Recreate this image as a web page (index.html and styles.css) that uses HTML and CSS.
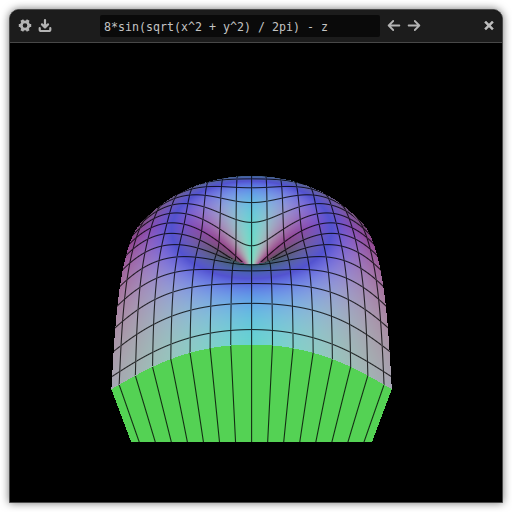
FILE: index.html
```
<!DOCTYPE html>
<html lang="en">
<head>
<meta charset="utf-8">
<title>Surface plot</title>
<link rel="stylesheet" href="styles.css">
</head>
<body>
<div class="window">
  <header class="bar">
    <svg class="icon" width="14" height="14" viewBox="0 0 14 14"><circle cx="7" cy="6.5" r="3.7" fill="none" stroke="#b4b4b4" stroke-width="2.8"/><path d="M11.3 6.5h1.9M.8 6.5h1.9M9.2 2.7l1-1.7M4.8 10.3l-1 1.7M4.8 2.7l-1-1.7M9.2 10.3l1 1.7" stroke="#b4b4b4" stroke-width="3.2"/></svg>
    <svg class="icon save" width="14" height="14" viewBox="0 0 14 14" fill="none" stroke="#b4b4b4" stroke-width="2.2" stroke-linecap="round" stroke-linejoin="round"><path d="M7 1.1v7M4 5.4l3 3 3-3"/><path d="M1.7 9.2v1.2q0 1.6 1.6 1.6h7.4q1.6 0 1.6-1.6V9.2"/></svg>
    <div class="formula">8*sin(sqrt(x^2 + y^2) / 2pi) - z</div>
    <svg class="icon back" width="14" height="14" viewBox="0 0 14 14" fill="none" stroke="#b4b4b4" stroke-width="1.8" stroke-linecap="round" stroke-linejoin="round"><path d="M12.4 6.5H1.6M6.2 2L1.7 6.5 6.2 11"/></svg>
    <svg class="icon next" width="14" height="14" viewBox="0 0 14 14" fill="none" stroke="#b4b4b4" stroke-width="1.8" stroke-linecap="round" stroke-linejoin="round"><path d="M1.6 6.5h10.8M7.8 2l4.5 4.5L7.8 11"/></svg>
    <svg class="icon close" width="10" height="10" viewBox="0 0 10 10" fill="none" stroke="#bcbcbc" stroke-width="2.5"><path d="M1.1.6l7.8 7.8M8.9.6L1.1 8.4"/></svg>
  </header>
  <canvas class="plot" id="plot" width="492" height="459"></canvas>
</div>
<script src="plot.js"></script>
</body>
</html>
```
FILE: styles.css
```
* { box-sizing: border-box; }
body { margin: 0; background: #fff; overflow: hidden; }
.window {
  width: 494px;
  height: 494px;
  margin: 9px;
  border: 1px solid #4a4a4a;
  border-radius: 10px 10px 0 0;
  background: #000;
  overflow: hidden;
  box-shadow: 0 0 9px rgba(0, 0, 0, .55);
}
.bar {
  display: flex;
  align-items: center;
  height: 33px;
  padding: 0 8px;
  background: #1c1c1c;
  border-bottom: 1px solid #484848;
}
.icon { flex: none; display: block; }
.save { margin-left: 6px; }
.formula {
  width: 280px;
  height: 22px;
  margin-left: 48px;
  padding-left: 4px;
  border-radius: 2px;
  background: #0a0a0a;
  color: #c4c4c4;
  font: 11.63px/24px "DejaVu Sans Mono", monospace;
  white-space: pre;
}
.back { margin-left: 7px; }
.next { margin-left: 6px; }
.close { margin-left: auto; }
.plot { display: block; }
```
FILE: plot.js
```
// z = A sin(r G / 2pi), cut by a box, seen through a pinhole camera.
const TH = 0.720, D = 53.428, F = 411.999, CX = 251.6, CY = 270.849;
const ZB = -13.836, G = 1.054, A = 7.199, K = 1.048, R = 15;
const OX = 10, OY = 43;
const c = Math.cos(TH), s = Math.sin(TH);
const cv = document.getElementById('plot'), g = cv.getContext('2d');
const W = cv.width, H = cv.height;
const height = (x, y) => A * Math.sin(Math.hypot(x, y) * G / (2 * Math.PI));

function cast(px, py) {
  const dx = (px - CX) / F, v = -(py - CY) / (K * F);
  const dy = -c - v * s, dz = -s + v * c;
  const ox = 0, oy = D * c, oz = D * s;
  let t0 = 0, t1 = 1e9, ax = 0;
  [[ox, dx, -R, R], [oy, dy, -R, R], [oz, dz, ZB, A + .01]].forEach((q, i) => {
    let a = (q[2] - q[0]) / q[1], b = (q[3] - q[0]) / q[1];
    if (a > b) { const m = a; a = b; b = m; }
    if (a > t0) { t0 = a; ax = i; }
    if (b < t1) t1 = b;
  });
  if (t0 >= t1) return null;
  const f = t => oz + dz * t - height(ox + dx * t, oy + dy * t);
  const at = (t, m) => ({ x: dx * t, y: oy + dy * t, m });
  if (f(t0) < 0) return at(t0, ax === 0 ? 1 : 2);
  let p = t0;
  for (let t = t0 + .15; ; t += .15) {
    if (t > t1) t = t1;
    if (f(t) < 0) {
      let a = p, b = t;
      for (let i = 0; i < 14; i++) { const m = (a + b) / 2; if (f(m) < 0) b = m; else a = m; }
      return at(b, 3);
    }
    if (t >= t1) return null;
    p = t;
  }
}

function shade(h) {
  if (h.m === 1) return [100, 40, 40];
  if (h.m === 2) return [84, 210, 84];
  const r = Math.hypot(h.x, h.y) || 1e-6;
  const k = 8 / (2 * Math.PI) * Math.cos(r * G / (2 * Math.PI));
  let n = [-k * h.x / r, -k * h.y / r, 1];
  const l = Math.hypot(...n);
  n = n.map(q => q / l);
  const lit = Math.max(.5, .46 + .76 * (n[1] + n[2]) * .7071);
  return n.map(q => 255 * (.325 + .49 * Math.abs(q)) * lit);
}

const hits = [];
for (let y = 0; y < H; y++) for (let x = 0; x < W; x++) {
  const X = x + OX + .5, Y = y + OY + .5;
  hits.push(X > 105 && X < 398 && Y > 168 && Y < 446 ? cast(X, Y) : null);
}
const img = g.createImageData(W, H);
for (let i = 0; i < hits.length; i++) {
  const h = hits[i];
  img.data[4 * i + 3] = 255;
  if (!h) continue;
  const col = shade(h);
  let cover = 0;
  const near = (j, k) => { const q = hits[j] || hits[k]; return q && q.m === h.m ? q : h; };
  const a = near(i + 1, i - 1), b = near(i + W, i - W);
  for (const key of ['x', 'y']) {
    if (h.m !== 3 && key === 'y') continue;
    const grad = Math.hypot(a[key] - h[key], b[key] - h[key]) || 1;
    const away = Math.abs(h[key] - 2 * Math.round(h[key] / 2)) / grad;
    if (grad < 1) cover = Math.max(cover, Math.min(1, Math.max(0, 1.05 - away)));
  }
  for (let j = 0; j < 3; j++) img.data[4 * i + j] = col[j] * (1 - .78 * cover);
}
g.putImageData(img, 0, 0);
```
